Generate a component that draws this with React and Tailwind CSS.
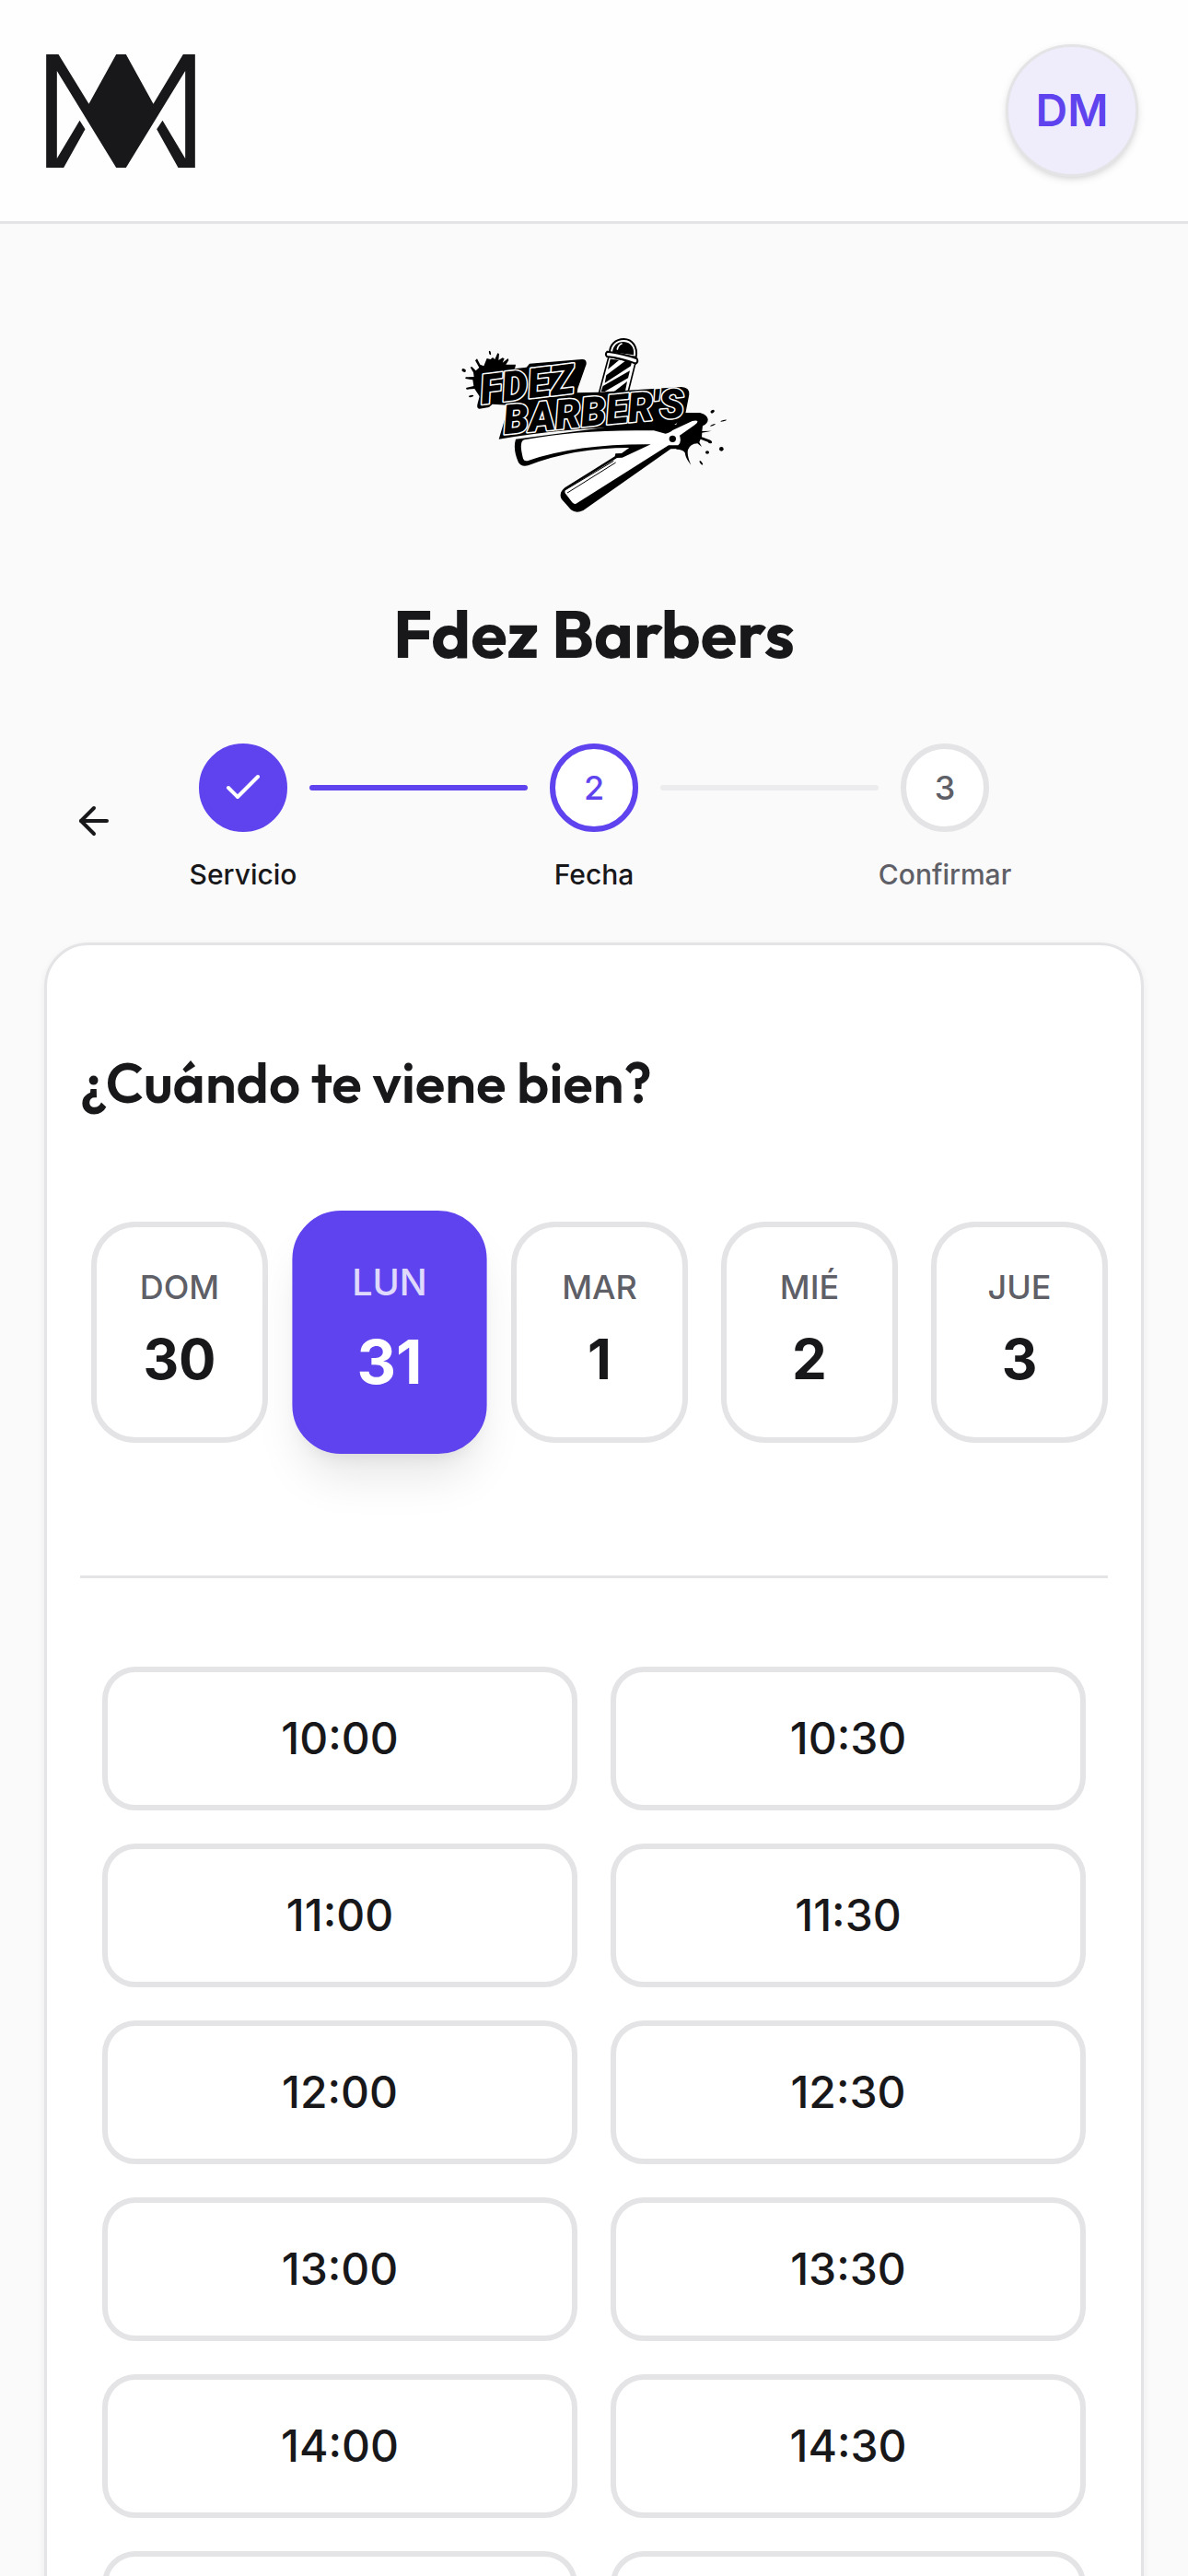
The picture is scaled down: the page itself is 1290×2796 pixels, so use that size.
import React, { useState } from "react";
import { ArrowLeft, Check } from "lucide-react";

const steps = [
  { number: 1, label: "Servicio", state: "done" },
  { number: 2, label: "Fecha", state: "current" },
  { number: 3, label: "Confirmar", state: "pending" },
];

const days = [
  { name: "DOM", date: 30 },
  { name: "LUN", date: 31 },
  { name: "MAR", date: 1 },
  { name: "MIÉ", date: 2 },
  { name: "JUE", date: 3 },
];

const slots = [
  "10:00", "10:30",
  "11:00", "11:30",
  "12:00", "12:30",
  "13:00", "13:30",
  "14:00", "14:30",
  "15:00", "15:30",
];

const circleStyles = {
  done: "border-[#5e43ee] bg-[#5e43ee] text-white",
  current: "border-[#5e43ee] bg-white text-[#5e43ee]",
  pending: "border-[#e4e4e7] bg-white text-[#5f5f67]",
};

function BrandMark() {
  return (
    <svg viewBox="151 174 485 369" className="h-[123px] w-[162px]" aria-hidden="true">
      <path
        fill="#18181b"
        d="M151 174H191L290 335L379 174H411L500 335L597 174H636V543H581L511 418L530 389L604 513V228L411 543H379L186 228V513L260 389L278 418L208 543H151Z"
      />
    </svg>
  );
}

function BarberLogo() {
  return (
    <svg viewBox="0 0 990 660" className="h-[220px] w-[330px]" role="img" aria-label="Logo de Fdez Barbers">
      {/* ink splash, left */}
      <path d="M130 250L106 213L80 215L78 210L103 204L100 184L76 180L77 175L104 174L102 160L92 143L97 141L110 154L121 144L108 121L114 115L124 134L136 139L146 114L158 117L165 111L172 117L181 97L186 99L184 120L197 112L203 115L197 128L215 114L217 120L208 134L240 134L238 145L190 190Z" />
      <ellipse cx="71" cy="153" rx="7" ry="5" transform="rotate(25 71 153)" />
      <ellipse cx="156" cy="96" rx="3" ry="7" transform="rotate(-15 156 96)" />
      <ellipse cx="95" cy="237" rx="8" ry="3" transform="rotate(-10 95 237)" />

      {/* barber pole */}
      <path d="M543 108L510 232H604L630 128Z" fill="#fff" stroke="#000" strokeWidth="5" />
      <path d="M548 116L577 119L540 150ZM597 122L618 125L615 139L530 194L535 169ZM612 154L606 178L530 222L518 222L524 204ZM603 189L597 220L556 226Z" />
      <path d="M546 96C546 70 565 51 592 51C620 51 638 76 632 110Z" fill="#fff" stroke="#000" strokeWidth="6" />
      <path d="M555 94C557 72 572 59 592 60C615 61 628 80 624 103Z" />
      <path d="M571 84Q574 70 585 66" fill="none" stroke="#fff" strokeWidth="5" strokeLinecap="round" />
      <path d="M538 92Q590 98 635 115Q640 125 631 131Q584 113 537 108Q530 99 538 92Z" fill="#fff" stroke="#000" strokeWidth="6" />

      {/* ink splash, right */}
      <path d="M780 291L840 291Q863 297 866 312Q867 325 849 334L847 351L878 350L847 356L846 370L874 380Q882 385 878 390Q870 393 866 386L842 377L838 387L846 402L832 391Q808 392 801 412Q797 430 811 461Q794 442 791 421Q784 410 764 410L740 380Z" />
      <ellipse cx="881" cy="287" rx="7" ry="5" transform="rotate(-30 881 287)" />
      <ellipse cx="917" cy="317" rx="10" ry="2" transform="rotate(-15 917 317)" />
      <ellipse cx="882" cy="331" rx="9" ry="2" transform="rotate(-22 882 331)" />
      <circle cx="910" cy="409" r="7" />
      <ellipse cx="864" cy="420" rx="6" ry="5" />
      <ellipse cx="844" cy="454" rx="3" ry="8" transform="rotate(-38 844 454)" />

      {/* razor blade and handle */}
      <path d="M240 377Q230 410 249 453Q259 469 282 462Q430 405 610 405L585 423L565 424L563 433L400 535Q378 553 390 573L420 607Q437 620 460 609L745 409L780 408L775 330L600 330L330 365Z" />
      <path d="M268 379Q450 344 690 349L728 359Q745 355 751 348L815 318Q830 314 832 319Q834 323 823 331L774 365Q781 388 769 397L738 397L440 585Q432 592 424 583L401 553Q398 545 405 540L570 438L587 437L680 394Q445 392 283 446Q268 451 264 440Q249 383 268 379Z" fill="#fff" />
      <path d="M402 542L559 448M408 552L566 453" fill="none" stroke="#000" strokeWidth="3" />
      <circle cx="751" cy="376" r="11" />

      {/* lettering backdrop */}
      <path d="M139 175Q145 157 165 155L275 143L285 131L455 117Q472 116 470 133L442 212L440 226L510 224L780 207Q807 208 805 232L793 293L775 316Q745 348 690 339Q450 332 185 377L218 266L164 263L153 273L122 278Q111 277 116 260Z" />
      <g
        fill="#000"
        stroke="#fff"
        strokeWidth="9"
        strokeLinejoin="round"
        style={{ paintOrder: "stroke" }}
        fontFamily="Roboto, sans-serif"
        fontStyle="italic"
        fontWeight="900"
      >
        <text x="130" y="263" fontSize="134" transform="rotate(-7 130 263)">FDEZ</text>
        <text x="203" y="361" fontSize="132" transform="rotate(-5.5 203 361)">BARBER'S</text>
      </g>
    </svg>
  );
}

function Stepper() {
  return (
    <ol className="ml-15 mr-42 flex flex-1 items-start">
      {steps.map((step, i) => (
        <React.Fragment key={step.number}>
          {i > 0 && (
            <li
              aria-hidden="true"
              className={`mx-6 mt-[45px] h-1.5 flex-1 rounded-full ${i === 1 ? "bg-[#5e43ee]" : "bg-[#ececee]"}`}
            />
          )}
          <li
            aria-current={step.state === "current" ? "step" : undefined}
            className="flex w-24 flex-col items-center gap-6 pb-1"
          >
            <span
              className={`flex size-24 items-center justify-center rounded-full border-6 text-[36px] leading-[48px] font-medium ${circleStyles[step.state]}`}
            >
              {step.state === "done" ? <Check size={48} strokeWidth={2} /> : step.number}
            </span>
            <span
              className={`text-[30px] leading-[44px] font-medium whitespace-nowrap ${step.state === "pending" ? "text-[#5f5f67]" : "text-[#18181b]"}`}
            >
              {step.label}
            </span>
          </li>
        </React.Fragment>
      ))}
    </ol>
  );
}

function DayButton({ day, selected, onSelect }) {
  return (
    <button
      type="button"
      aria-pressed={selected}
      onClick={onSelect}
      className={`flex h-60 flex-1 flex-col items-center justify-center gap-3 rounded-[48px] border-6 pb-0.5 ${
        selected
          ? "scale-110 border-[#5e43ee] bg-[#5e43ee] text-white shadow-[0_30px_45px_-9px_rgba(0,0,0,0.1),0_12px_18px_-12px_rgba(0,0,0,0.1)]"
          : "border-[#e4e4e7] bg-white text-[#18181b]"
      }`}
    >
      <span className={`text-[36px] leading-[48px] font-medium ${selected ? "text-white/80" : "text-[#5f5f67]"}`}>
        {day.name}
      </span>
      <span className="text-[60px] leading-[84px] font-bold">{day.date}</span>
    </button>
  );
}

export default function App() {
  const [date, setDate] = useState(31);
  const [time, setTime] = useState(null);

  return (
    <div className="flex h-screen flex-col overflow-hidden bg-[#fafafa] font-['Inter',sans-serif] text-[#18181b]">
      <header className="flex h-[243px] shrink-0 items-center justify-between border-b-3 border-[#e4e4e7] bg-[#fefefe] pr-[54px] pl-[50px]">
        <a href="#inicio" aria-label="Inicio">
          <BrandMark />
        </a>
        <button
          type="button"
          aria-label="Cuenta de DM"
          className="flex size-36 items-center justify-center rounded-full border-3 border-[#e4e4e7] bg-[#efecfb] text-[48px] font-semibold text-[#5e43ee] shadow-[0_3px_9px_rgba(0,0,0,0.1),0_3px_6px_-3px_rgba(0,0,0,0.1)]"
        >
          DM
        </button>
      </header>

      <main className="flex-1 overflow-y-auto px-12 pt-27 pb-12 [scrollbar-width:none]">
        <div className="flex flex-col items-center gap-18">
          <BarberLogo />
          <h1 className="font-['Outfit','Lato',sans-serif] text-[72px] leading-[90px] font-bold">Fdez Barbers</h1>
        </div>

        <div className="mt-[74px] flex items-center">
          <button type="button" aria-label="Volver" className="flex size-27 items-center justify-center rounded-3xl">
            <ArrowLeft size={48} strokeWidth={2} />
          </button>
          <Stepper />
        </div>

        <section className="mt-12 rounded-[48px] border-3 border-[#e4e4e7] bg-white px-9 pt-28 pb-24 shadow-[0_3px_9px_rgba(0,0,0,0.06)]">
          <h2 className="font-['Outfit','Lato',sans-serif] text-[60px] leading-[75px] font-semibold">
            ¿Cuándo te viene bien?
          </h2>

          <div className="mt-[113px] flex gap-9 pl-3">
            {days.map((day) => (
              <DayButton
                key={day.date}
                day={day}
                selected={day.date === date}
                onSelect={() => setDate(day.date)}
              />
            ))}
          </div>

          <hr className="mt-36 border-t-3 border-[#e4e4e7]" />

          <div className="mt-24 grid grid-cols-2 gap-9 px-6">
            {slots.map((slot) => (
              <button
                key={slot}
                type="button"
                aria-pressed={slot === time}
                onClick={() => setTime(slot)}
                className={`h-39 rounded-[36px] border-6 bg-white text-[48px] font-medium ${
                  slot === time ? "border-[#5e43ee]" : "border-[#e4e4e7]"
                }`}
              >
                {slot}
              </button>
            ))}
          </div>
        </section>
      </main>
    </div>
  );
}
